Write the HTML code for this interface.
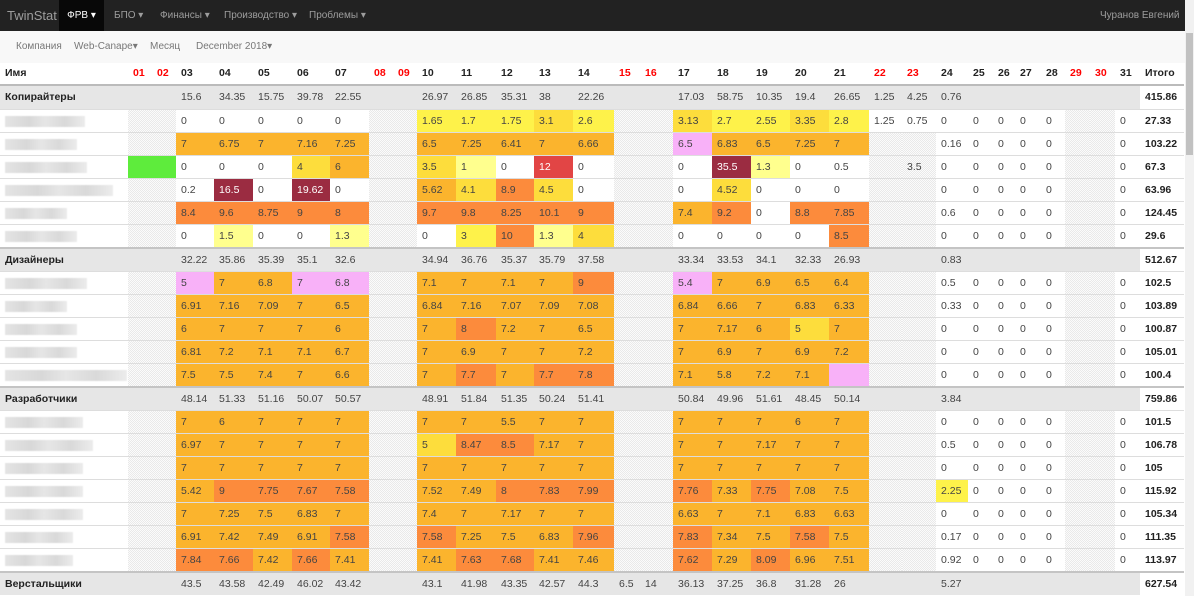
<!DOCTYPE html>
<html><head><meta charset="utf-8"><style>
*{margin:0;padding:0;box-sizing:border-box}
body{width:1194px;height:596px;overflow:hidden;background:#fff;font-family:"Liberation Sans",Arial,sans-serif;font-size:10.5px;color:#333;position:relative}
.nav{position:absolute;left:0;top:0;width:1185px;height:31px;background:#222;color:#9d9d9d}
.nav span{position:absolute;top:0;line-height:31px;font-size:10px}
.nav .brand{font-size:13px;left:7px}
.nav .act{left:59px;width:45px;background:#080808;color:#fff;text-align:center}
.sub{position:absolute;left:0;top:31px;width:1185px;height:32px;background:#f8f8f8;color:#777;font-size:10px}
.sub span{position:absolute;line-height:32px}
.sb{position:absolute;left:1185px;top:0;width:9px;height:596px;background:#f1f1f1}
.sb i{position:absolute;left:1px;top:33px;width:7px;height:122px;background:#c1c1c1}
.tbl{position:absolute;left:0;top:63px;width:1184px}
.r{display:flex;height:23px;border-top:1px solid #ddd}
.r>span{line-height:22px;padding-left:5px;white-space:nowrap;overflow:hidden;color:#444;flex:none}
.h{height:23px;border-top:none;border-bottom:2px solid #bbb}
.h>span{font-weight:bold;color:#222;line-height:21px}
.h>span.we{color:#f00}
.g{height:24px;border-top:2px solid #c4c4c4;background:#e6e6e6}
.g.f{height:23px;border-top:none}
.g>span:first-child{font-weight:bold;color:#222}
.g>span:last-child{background:#fff}
.r>span:last-child{font-weight:bold;color:#222}
.r>span:nth-child(1){width:128px}.r>span:nth-child(2),.r>span:nth-child(3){width:24px}
.r>span:nth-child(4){width:38px}.r>span:nth-child(5){width:39px}.r>span:nth-child(6){width:39px}.r>span:nth-child(7){width:38px}.r>span:nth-child(8){width:39px}
.r>span:nth-child(9),.r>span:nth-child(10){width:24px}
.r>span:nth-child(11){width:39px}.r>span:nth-child(12){width:40px}.r>span:nth-child(13){width:38px}.r>span:nth-child(14){width:39px}.r>span:nth-child(15){width:41px}
.r>span:nth-child(16){width:26px}.r>span:nth-child(17){width:33px}
.r>span:nth-child(18),.r>span:nth-child(19),.r>span:nth-child(20),.r>span:nth-child(21){width:39px}.r>span:nth-child(22){width:40px}
.r>span:nth-child(23){width:33px}.r>span:nth-child(24){width:34px}.r>span:nth-child(25){width:32px}.r>span:nth-child(26){width:25px}.r>span:nth-child(27){width:22px}.r>span:nth-child(28){width:26px}.r>span:nth-child(29){width:24px}
.r>span:nth-child(30),.r>span:nth-child(31),.r>span:nth-child(32){width:25px}.r>span:nth-child(33){width:44px}
.w{background:repeating-conic-gradient(#e9e9e9 0 25%,#fbfbfb 0 50%) 0 0/2px 2px}
.o{background:#fbb42d}.d{background:#fc8b3c}.y{background:#fddd3c}.ly{background:#ffff8e}.by{background:#fef24a}
.rd{background:#e24545;color:#fff!important}.m{background:#9b2c41;color:#fff!important}.p{background:#f8b1f8}.gr{background:#5eec3c}
.nm i{display:block;height:11px;margin-top:6px;background:linear-gradient(90deg,#e4e4e4,#d8d8d8 30%,#e6e6e6 50%,#d9d9d9 75%,#ececec);filter:blur(0.6px)}
</style></head><body>
<div class="nav"><span class="brand">TwinStat</span><span class="act">ФРВ ▾</span><span style="left:114px">БПО ▾</span><span style="left:160px">Финансы ▾</span><span style="left:224px">Производство ▾</span><span style="left:309px">Проблемы ▾</span><span style="left:1100px">Чуранов Евгений ▾</span></div>
<div class="sub"><span style="left:16px">Компания</span><span style="left:74px">Web-Canape▾</span><span style="left:150px">Месяц</span><span style="left:196px">December 2018▾</span></div>
<div class="sb"><i></i></div>
<div class="tbl">
<div class="r h"><span>Имя</span><span class="we">01</span><span class="we">02</span><span>03</span><span>04</span><span>05</span><span>06</span><span>07</span><span class="we">08</span><span class="we">09</span><span>10</span><span>11</span><span>12</span><span>13</span><span>14</span><span class="we">15</span><span class="we">16</span><span>17</span><span>18</span><span>19</span><span>20</span><span>21</span><span class="we">22</span><span class="we">23</span><span>24</span><span>25</span><span>26</span><span>27</span><span>28</span><span class="we">29</span><span class="we">30</span><span>31</span><span>Итого</span></div>

<div class="r g f"><span>Копирайтеры</span><span></span><span></span><span>15.6</span><span>34.35</span><span>15.75</span><span>39.78</span><span>22.55</span><span></span><span></span><span>26.97</span><span>26.85</span><span>35.31</span><span>38</span><span>22.26</span><span></span><span></span><span>17.03</span><span>58.75</span><span>10.35</span><span>19.4</span><span>26.65</span><span>1.25</span><span>4.25</span><span>0.76</span><span></span><span></span><span></span><span></span><span></span><span></span><span></span><span>415.86</span></div>
<div class="r"><span class="nm"><i style="width:80px"></i></span><span class="w"></span><span class="w"></span><span>0</span><span>0</span><span>0</span><span>0</span><span>0</span><span class="w"></span><span class="w"></span><span class="by">1.65</span><span class="by">1.7</span><span class="by">1.75</span><span class="y">3.1</span><span class="by">2.6</span><span class="w"></span><span class="w"></span><span class="y">3.13</span><span class="by">2.7</span><span class="by">2.55</span><span class="y">3.35</span><span class="by">2.8</span><span>1.25</span><span>0.75</span><span>0</span><span>0</span><span>0</span><span>0</span><span>0</span><span class="w"></span><span class="w"></span><span>0</span><span>27.33</span></div>
<div class="r"><span class="nm"><i style="width:72px"></i></span><span class="w"></span><span class="w"></span><span class="o">7</span><span class="o">6.75</span><span class="o">7</span><span class="o">7.16</span><span class="o">7.25</span><span class="w"></span><span class="w"></span><span class="o">6.5</span><span class="o">7.25</span><span class="o">6.41</span><span class="o">7</span><span class="o">6.66</span><span class="w"></span><span class="w"></span><span class="p">6.5</span><span class="o">6.83</span><span class="o">6.5</span><span class="o">7.25</span><span class="o">7</span><span class="w"></span><span class="w"></span><span>0.16</span><span>0</span><span>0</span><span>0</span><span>0</span><span class="w"></span><span class="w"></span><span>0</span><span>103.22</span></div>
<div class="r"><span class="nm"><i style="width:82px"></i></span><span class="gr"></span><span class="gr"></span><span>0</span><span>0</span><span>0</span><span class="y">4</span><span class="o">6</span><span class="w"></span><span class="w"></span><span class="y">3.5</span><span class="ly">1</span><span>0</span><span class="rd">12</span><span>0</span><span class="w"></span><span class="w"></span><span>0</span><span class="m">35.5</span><span class="ly">1.3</span><span>0</span><span>0.5</span><span class="w"></span><span class="w">3.5</span><span>0</span><span>0</span><span>0</span><span>0</span><span>0</span><span class="w"></span><span class="w"></span><span>0</span><span>67.3</span></div>
<div class="r"><span class="nm"><i style="width:108px"></i></span><span class="w"></span><span class="w"></span><span>0.2</span><span class="m">16.5</span><span>0</span><span class="m">19.62</span><span>0</span><span class="w"></span><span class="w"></span><span class="o">5.62</span><span class="y">4.1</span><span class="d">8.9</span><span class="y">4.5</span><span>0</span><span class="w"></span><span class="w"></span><span>0</span><span class="y">4.52</span><span>0</span><span>0</span><span>0</span><span class="w"></span><span class="w"></span><span>0</span><span>0</span><span>0</span><span>0</span><span>0</span><span class="w"></span><span class="w"></span><span>0</span><span>63.96</span></div>
<div class="r"><span class="nm"><i style="width:62px"></i></span><span class="w"></span><span class="w"></span><span class="d">8.4</span><span class="d">9.6</span><span class="d">8.75</span><span class="d">9</span><span class="d">8</span><span class="w"></span><span class="w"></span><span class="d">9.7</span><span class="d">9.8</span><span class="d">8.25</span><span class="d">10.1</span><span class="d">9</span><span class="w"></span><span class="w"></span><span class="o">7.4</span><span class="d">9.2</span><span>0</span><span class="d">8.8</span><span class="d">7.85</span><span class="w"></span><span class="w"></span><span>0.6</span><span>0</span><span>0</span><span>0</span><span>0</span><span class="w"></span><span class="w"></span><span>0</span><span>124.45</span></div>
<div class="r"><span class="nm"><i style="width:72px"></i></span><span class="w"></span><span class="w"></span><span>0</span><span class="ly">1.5</span><span>0</span><span>0</span><span class="ly">1.3</span><span class="w"></span><span class="w"></span><span>0</span><span class="by">3</span><span class="d">10</span><span class="ly">1.3</span><span class="y">4</span><span class="w"></span><span class="w"></span><span>0</span><span>0</span><span>0</span><span>0</span><span class="d">8.5</span><span class="w"></span><span class="w"></span><span>0</span><span>0</span><span>0</span><span>0</span><span>0</span><span class="w"></span><span class="w"></span><span>0</span><span>29.6</span></div>

<div class="r g"><span>Дизайнеры</span><span></span><span></span><span>32.22</span><span>35.86</span><span>35.39</span><span>35.1</span><span>32.6</span><span></span><span></span><span>34.94</span><span>36.76</span><span>35.37</span><span>35.79</span><span>37.58</span><span></span><span></span><span>33.34</span><span>33.53</span><span>34.1</span><span>32.33</span><span>26.93</span><span></span><span></span><span>0.83</span><span></span><span></span><span></span><span></span><span></span><span></span><span></span><span>512.67</span></div>
<div class="r"><span class="nm"><i style="width:82px"></i></span><span class="w"></span><span class="w"></span><span class="p">5</span><span class="o">7</span><span class="o">6.8</span><span class="p">7</span><span class="p">6.8</span><span class="w"></span><span class="w"></span><span class="o">7.1</span><span class="o">7</span><span class="o">7.1</span><span class="o">7</span><span class="d">9</span><span class="w"></span><span class="w"></span><span class="p">5.4</span><span class="o">7</span><span class="o">6.9</span><span class="o">6.5</span><span class="o">6.4</span><span class="w"></span><span class="w"></span><span>0.5</span><span>0</span><span>0</span><span>0</span><span>0</span><span class="w"></span><span class="w"></span><span>0</span><span>102.5</span></div>
<div class="r"><span class="nm"><i style="width:62px"></i></span><span class="w"></span><span class="w"></span><span class="o">6.91</span><span class="o">7.16</span><span class="o">7.09</span><span class="o">7</span><span class="o">6.5</span><span class="w"></span><span class="w"></span><span class="o">6.84</span><span class="o">7.16</span><span class="o">7.07</span><span class="o">7.09</span><span class="o">7.08</span><span class="w"></span><span class="w"></span><span class="o">6.84</span><span class="o">6.66</span><span class="o">7</span><span class="o">6.83</span><span class="o">6.33</span><span class="w"></span><span class="w"></span><span>0.33</span><span>0</span><span>0</span><span>0</span><span>0</span><span class="w"></span><span class="w"></span><span>0</span><span>103.89</span></div>
<div class="r"><span class="nm"><i style="width:72px"></i></span><span class="w"></span><span class="w"></span><span class="o">6</span><span class="o">7</span><span class="o">7</span><span class="o">7</span><span class="o">6</span><span class="w"></span><span class="w"></span><span class="o">7</span><span class="d">8</span><span class="o">7.2</span><span class="o">7</span><span class="o">6.5</span><span class="w"></span><span class="w"></span><span class="o">7</span><span class="o">7.17</span><span class="o">6</span><span class="y">5</span><span class="o">7</span><span class="w"></span><span class="w"></span><span>0</span><span>0</span><span>0</span><span>0</span><span>0</span><span class="w"></span><span class="w"></span><span>0</span><span>100.87</span></div>
<div class="r"><span class="nm"><i style="width:72px"></i></span><span class="w"></span><span class="w"></span><span class="o">6.81</span><span class="o">7.2</span><span class="o">7.1</span><span class="o">7.1</span><span class="o">6.7</span><span class="w"></span><span class="w"></span><span class="o">7</span><span class="o">6.9</span><span class="o">7</span><span class="o">7</span><span class="o">7.2</span><span class="w"></span><span class="w"></span><span class="o">7</span><span class="o">6.9</span><span class="o">7</span><span class="o">6.9</span><span class="o">7.2</span><span class="w"></span><span class="w"></span><span>0</span><span>0</span><span>0</span><span>0</span><span>0</span><span class="w"></span><span class="w"></span><span>0</span><span>105.01</span></div>
<div class="r"><span class="nm"><i style="width:122px"></i></span><span class="w"></span><span class="w"></span><span class="o">7.5</span><span class="o">7.5</span><span class="o">7.4</span><span class="o">7</span><span class="o">6.6</span><span class="w"></span><span class="w"></span><span class="o">7</span><span class="d">7.7</span><span class="o">7</span><span class="d">7.7</span><span class="d">7.8</span><span class="w"></span><span class="w"></span><span class="o">7.1</span><span class="o">5.8</span><span class="o">7.2</span><span class="o">7.1</span><span class="p"></span><span class="w"></span><span class="w"></span><span>0</span><span>0</span><span>0</span><span>0</span><span>0</span><span class="w"></span><span class="w"></span><span>0</span><span>100.4</span></div>

<div class="r g"><span>Разработчики</span><span></span><span></span><span>48.14</span><span>51.33</span><span>51.16</span><span>50.07</span><span>50.57</span><span></span><span></span><span>48.91</span><span>51.84</span><span>51.35</span><span>50.24</span><span>51.41</span><span></span><span></span><span>50.84</span><span>49.96</span><span>51.61</span><span>48.45</span><span>50.14</span><span></span><span></span><span>3.84</span><span></span><span></span><span></span><span></span><span></span><span></span><span></span><span>759.86</span></div>
<div class="r"><span class="nm"><i style="width:78px"></i></span><span class="w"></span><span class="w"></span><span class="o">7</span><span class="o">6</span><span class="o">7</span><span class="o">7</span><span class="o">7</span><span class="w"></span><span class="w"></span><span class="o">7</span><span class="o">7</span><span class="o">5.5</span><span class="o">7</span><span class="o">7</span><span class="w"></span><span class="w"></span><span class="o">7</span><span class="o">7</span><span class="o">7</span><span class="o">6</span><span class="o">7</span><span class="w"></span><span class="w"></span><span>0</span><span>0</span><span>0</span><span>0</span><span>0</span><span class="w"></span><span class="w"></span><span>0</span><span>101.5</span></div>
<div class="r"><span class="nm"><i style="width:88px"></i></span><span class="w"></span><span class="w"></span><span class="o">6.97</span><span class="o">7</span><span class="o">7</span><span class="o">7</span><span class="o">7</span><span class="w"></span><span class="w"></span><span class="y">5</span><span class="d">8.47</span><span class="d">8.5</span><span class="o">7.17</span><span class="o">7</span><span class="w"></span><span class="w"></span><span class="o">7</span><span class="o">7</span><span class="o">7.17</span><span class="o">7</span><span class="o">7</span><span class="w"></span><span class="w"></span><span>0.5</span><span>0</span><span>0</span><span>0</span><span>0</span><span class="w"></span><span class="w"></span><span>0</span><span>106.78</span></div>
<div class="r"><span class="nm"><i style="width:78px"></i></span><span class="w"></span><span class="w"></span><span class="o">7</span><span class="o">7</span><span class="o">7</span><span class="o">7</span><span class="o">7</span><span class="w"></span><span class="w"></span><span class="o">7</span><span class="o">7</span><span class="o">7</span><span class="o">7</span><span class="o">7</span><span class="w"></span><span class="w"></span><span class="o">7</span><span class="o">7</span><span class="o">7</span><span class="o">7</span><span class="o">7</span><span class="w"></span><span class="w"></span><span>0</span><span>0</span><span>0</span><span>0</span><span>0</span><span class="w"></span><span class="w"></span><span>0</span><span>105</span></div>
<div class="r"><span class="nm"><i style="width:78px"></i></span><span class="w"></span><span class="w"></span><span class="o">5.42</span><span class="d">9</span><span class="d">7.75</span><span class="d">7.67</span><span class="d">7.58</span><span class="w"></span><span class="w"></span><span class="o">7.52</span><span class="o">7.49</span><span class="d">8</span><span class="d">7.83</span><span class="d">7.99</span><span class="w"></span><span class="w"></span><span class="d">7.76</span><span class="o">7.33</span><span class="d">7.75</span><span class="o">7.08</span><span class="o">7.5</span><span class="w"></span><span class="w"></span><span class="by">2.25</span><span>0</span><span>0</span><span>0</span><span>0</span><span class="w"></span><span class="w"></span><span>0</span><span>115.92</span></div>
<div class="r"><span class="nm"><i style="width:78px"></i></span><span class="w"></span><span class="w"></span><span class="o">7</span><span class="o">7.25</span><span class="o">7.5</span><span class="o">6.83</span><span class="o">7</span><span class="w"></span><span class="w"></span><span class="o">7.4</span><span class="o">7</span><span class="o">7.17</span><span class="o">7</span><span class="o">7</span><span class="w"></span><span class="w"></span><span class="o">6.63</span><span class="o">7</span><span class="o">7.1</span><span class="o">6.83</span><span class="o">6.63</span><span class="w"></span><span class="w"></span><span>0</span><span>0</span><span>0</span><span>0</span><span>0</span><span class="w"></span><span class="w"></span><span>0</span><span>105.34</span></div>
<div class="r"><span class="nm"><i style="width:68px"></i></span><span class="w"></span><span class="w"></span><span class="o">6.91</span><span class="o">7.42</span><span class="o">7.49</span><span class="o">6.91</span><span class="d">7.58</span><span class="w"></span><span class="w"></span><span class="d">7.58</span><span class="o">7.25</span><span class="o">7.5</span><span class="o">6.83</span><span class="d">7.96</span><span class="w"></span><span class="w"></span><span class="d">7.83</span><span class="o">7.34</span><span class="o">7.5</span><span class="d">7.58</span><span class="o">7.5</span><span class="w"></span><span class="w"></span><span>0.17</span><span>0</span><span>0</span><span>0</span><span>0</span><span class="w"></span><span class="w"></span><span>0</span><span>111.35</span></div>
<div class="r"><span class="nm"><i style="width:68px"></i></span><span class="w"></span><span class="w"></span><span class="d">7.84</span><span class="d">7.66</span><span class="o">7.42</span><span class="d">7.66</span><span class="o">7.41</span><span class="w"></span><span class="w"></span><span class="o">7.41</span><span class="d">7.63</span><span class="d">7.68</span><span class="o">7.41</span><span class="o">7.46</span><span class="w"></span><span class="w"></span><span class="d">7.62</span><span class="o">7.29</span><span class="d">8.09</span><span class="o">6.96</span><span class="o">7.51</span><span class="w"></span><span class="w"></span><span>0.92</span><span>0</span><span>0</span><span>0</span><span>0</span><span class="w"></span><span class="w"></span><span>0</span><span>113.97</span></div>

<div class="r g"><span>Верстальщики</span><span></span><span></span><span>43.5</span><span>43.58</span><span>42.49</span><span>46.02</span><span>43.42</span><span></span><span></span><span>43.1</span><span>41.98</span><span>43.35</span><span>42.57</span><span>44.3</span><span>6.5</span><span>14</span><span>36.13</span><span>37.25</span><span>36.8</span><span>31.28</span><span>26</span><span></span><span></span><span>5.27</span><span></span><span></span><span></span><span></span><span></span><span></span><span></span><span>627.54</span></div>
</div>
</body></html>
